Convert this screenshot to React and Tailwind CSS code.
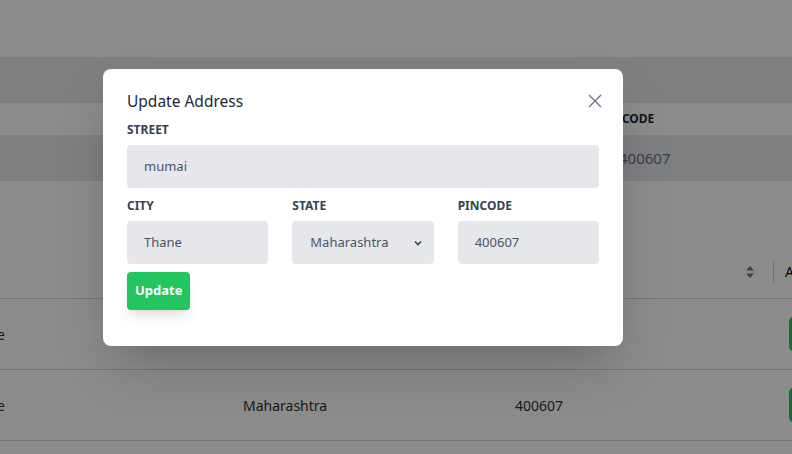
import React from "react";

function SortIcon() {
  return (
    <svg width="10" height="14" viewBox="0 0 10 14" className="shrink-0 text-gray-500">
      <path d="M5 1 L9 5.5 H1 Z" fill="currentColor" />
      <path d="M5 13 L9 8.5 H1 Z" fill="currentColor" />
    </svg>
  );
}

function Row() {
  return (
    <div className="h-[71px] border-b border-gray-300 flex items-center -ml-[36px] text-[14px] text-[#333]">
      <div className="w-[279px] shrink-0">Thane</div>
      <div className="w-[272px] shrink-0">Maharashtra</div>
      <div className="w-[274px] shrink-0">400607</div>
      <div className="w-[80px] shrink-0 h-[36px] rounded-md bg-[#22c55e]" />
    </div>
  );
}

export default function App() {
  return (
    <div className="relative w-[792px] h-[454px] overflow-hidden bg-white font-['Noto_Sans',sans-serif]">
      {/* underlying page */}
      <div className="h-[57px] bg-white" />
      <div className="h-[46px] bg-[#e5e7eb]" />
      <div className="h-[32px] bg-white flex items-center pl-[600px] text-[12px] font-bold text-gray-800">PINCODE</div>
      <div className="h-[46px] bg-[#e5e7eb] flex items-center pl-[619px] text-[15px] text-gray-500">400607</div>
      <div className="h-[64px] bg-white" />
      <div className="h-[54px] border-b border-gray-300 flex items-center">
        <div className="w-[745px] shrink-0" />
        <SortIcon />
        <div className="ml-[18px] w-px h-[22px] shrink-0 bg-gray-300" />
        <div className="ml-[11px] shrink-0 text-[14px] text-[#111]">Action</div>
      </div>
      <Row />
      <Row />

      {/* overlay */}
      <div className="absolute inset-0 bg-black/45 flex justify-start items-start pt-[69px] pl-[103px]">
        <div className="w-[520px] bg-white rounded-lg shadow-2xl px-6 pt-5 pb-9">
          <div className="flex items-center justify-between h-6">
            <h2 className="text-[15.5px] leading-6 text-gray-800">Update Address</h2>
            <svg width="14" height="14" viewBox="0 0 14 14" className="mr-[-3px] text-gray-500">
              <path d="M1 1 L13 13 M13 1 L1 13" stroke="currentColor" strokeWidth="1.3" fill="none" />
            </svg>
          </div>
          <label className="block mt-[9px] text-[12px] leading-4 font-bold text-gray-700 uppercase">Street</label>
          <div className="mt-[7px] h-[43px] rounded bg-[#e5e7eb] flex items-center pl-[17px] text-[13px] text-gray-600">mumai</div>
          <div className="mt-[10px] grid grid-cols-3 gap-6">
            <div>
              <label className="block text-[12px] leading-4 font-bold text-gray-700 uppercase">City</label>
              <div className="mt-[7px] h-[43px] rounded bg-[#e5e7eb] flex items-center pl-[17px] text-[13px] text-gray-600">Thane</div>
            </div>
            <div>
              <label className="block text-[12px] leading-4 font-bold text-gray-700 uppercase">State</label>
              <div className="mt-[7px] h-[43px] rounded bg-[#e5e7eb] flex items-center justify-between pl-[18px] pr-[11px] text-[13px] text-gray-600">
                <span>Maharashtra</span>
                <svg width="10" height="10" viewBox="0 0 10 10" className="text-gray-700">
                  <path d="M2 3.5 L5 6.5 L8 3.5" stroke="currentColor" strokeWidth="1.6" fill="none" />
                </svg>
              </div>
            </div>
            <div>
              <label className="block text-[12px] leading-4 font-bold text-gray-700 uppercase">Pincode</label>
              <div className="mt-[7px] h-[43px] rounded bg-[#e5e7eb] flex items-center pl-[17px] text-[13px] text-gray-600">400607</div>
            </div>
          </div>
          <button className="mt-2 h-[38px] px-2 rounded bg-[#22c55e] text-white text-[13px] font-bold shadow-lg">Update</button>
        </div>
      </div>
    </div>
  );
}
